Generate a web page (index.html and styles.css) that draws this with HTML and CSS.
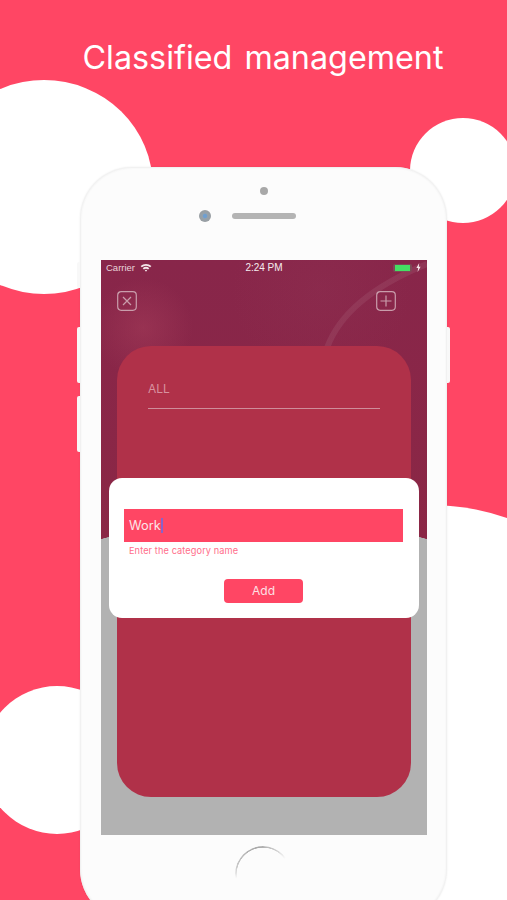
FILE: index.html
```html
<!DOCTYPE html>
<html lang="en">
<head>
<meta charset="utf-8">
<title>Classified management</title>
<link rel="stylesheet" href="styles.css">
</head>
<body>
<div class="stage">
  <div class="blob blob-a"></div>
  <div class="blob blob-b"></div>
  <div class="blob blob-c"></div>
  <div class="blob blob-d"></div>
  <h1 class="title">Classified management</h1>
  <div class="phone">
    <span class="side side-1"></span>
    <span class="side side-2"></span>
    <span class="side side-3"></span>
    <span class="side side-4"></span>
    <div class="bezel-top">
      <span class="sensor"></span>
      <div class="cam-row">
        <span class="camera"></span>
        <span class="speaker"></span>
      </div>
    </div>
    <div class="screen">
      <svg class="arc" viewBox="0 0 326 100" aria-hidden="true"><path d="M226 88C236 60 262 30 326 4" fill="none" stroke="#fff" stroke-opacity=".07" stroke-width="6"/></svg>
      <div class="statusbar">
        <div class="status-left">
          <span>Carrier</span>
          <svg class="wifi" viewBox="0 0 12 9" aria-hidden="true"><path d="M.6 3A8 8 0 0 1 11.4 3L10.200 4.300A6.200 6.200 0 0 0 1.800 4.300ZM2.700 5.200A5 5 0 0 1 9.300 5.200L8.100 6.500A3.300 3.300 0 0 0 3.900 6.500ZM4.800 7.300A1.800 1.800 0 0 1 7.200 7.300L6 8.700Z" fill="#f4e6ea"/></svg>
        </div>
        <span class="clock">2:24 PM</span>
        <div class="status-right">
          <span class="battery"><span class="charge"></span></span>
          <svg class="bolt" viewBox="0 0 5 9" aria-hidden="true"><path d="M3.200 0 .4 5H2.200L1.600 9 4.600 3.700H2.800Z" fill="#f4e6ea"/></svg>
        </div>
      </div>
      <div class="navbar">
        <svg class="nav-icon" viewBox="0 0 20 20" aria-hidden="true"><rect x=".7" y=".7" width="18.600" height="18.600" rx="3.500"/><path d="M6 6 14 14M14 6 6 14"/></svg>
        <svg class="nav-icon" viewBox="0 0 20 20" aria-hidden="true"><rect x=".7" y=".7" width="18.600" height="18.600" rx="3.500"/><path d="M10 4.500V15.500M4.500 10H15.500"/></svg>
      </div>
      <div class="card">
        <div class="card-label">ALL</div>
      </div>
    </div>
    <div class="dialog">
      <div class="field">Work<span class="caret"></span></div>
      <div class="hint">Enter the category name</div>
      <button class="add" type="button">Add</button>
    </div>
    <div class="home"></div>
  </div>
</div>
</body>
</html>
```
FILE: styles.css
```css
* { box-sizing: border-box; }
html, body { margin: 0; padding: 0; }
body { background: #ff4664; font-family: "Inter", "Liberation Sans", sans-serif; }
.stage { position: relative; width: 507px; height: 900px; overflow: hidden; background: #ff4664; padding-top: 39px; }
.blob { position: absolute; border-radius: 50%; background: #fff; }
.blob-a { left: -65px; top: 80px; width: 218px; height: 214px; }
.blob-b { left: 410px; top: 118px; width: 106px; height: 105px; }
.blob-c { left: 195px; top: 505px; width: 470px; height: 470px; }
.blob-d { left: -17px; top: 686px; width: 148px; height: 148px; }
.title { position: relative; margin: 0; text-align: center; color: #fff; font-family: "Inter", sans-serif; font-size: 32.300px; line-height: 38px; font-weight: 400; word-spacing: 3px; padding-left: 19px; white-space: nowrap; }
.phone { position: relative; width: 367px; margin: 90px 0 0 79.500px; height: 754px; background: #fcfcfc; border-radius: 52px; box-shadow: inset 0 0 2px 1px #eeeeee, 0 0 2px rgba(0, 0, 0, .08); padding: 0 20px 0 21.500px; }
.side { position: absolute; width: 3px; background: #f8f8f8; border-radius: 2px 0 0 2px; left: -3px; }
.side-1 { top: 95px; height: 26px; }
.side-2 { top: 160px; height: 56px; }
.side-3 { top: 229px; height: 56px; }
.side-4 { left: auto; right: -3px; top: 160px; height: 56px; border-radius: 0 2px 2px 0; }
.bezel-top { height: 93px; display: flex; flex-direction: column; align-items: center; padding-top: 20px; }
.sensor { width: 8px; height: 8px; border-radius: 50%; background: #a8a8a8; }
.cam-row { display: flex; align-items: center; gap: 21px; margin-top: 15px; margin-left: -33px; }
.camera { width: 12px; height: 12px; border-radius: 50%; background: radial-gradient(circle, #6f9fd0 0 20%, #96a2ab 32%, #9a9a9a 100%); }
.speaker { width: 64px; height: 6px; border-radius: 3px; background: #b4b4b4; }
.screen {
  position: relative;
  width: 326px;
  height: 575px;
  overflow: hidden;
  background:
    radial-gradient(circle 620px at 163px 877px, #b2b2b2 619.500px, transparent 620px),
    radial-gradient(circle 50px at 42px 68px, rgba(190, 80, 105, .28), transparent),
    radial-gradient(circle 90px at 220px 30px, rgba(150, 60, 90, .18), transparent),
    linear-gradient(#88264a, #8b2745 50%, #8c2340);
}
.arc { position: absolute; left: 0; top: 0; width: 326px; height: 100px; }
.statusbar { position: relative; height: 15px; display: grid; grid-template-columns: 1fr auto 1fr; align-items: center; padding: 0 6px 0 5px; color: #e8d3da; font-family: "Liberation Sans", sans-serif; font-size: 9.500px; }
.status-left { display: flex; align-items: center; gap: 5px; }
.wifi { width: 12px; height: 9px; }
.clock { color: #f6ecef; font-size: 10px; margin-left: 1px; }
.status-right { display: flex; align-items: center; justify-content: flex-end; gap: 4px; }
.battery { width: 19px; height: 8px; padding: 1px 2px; border-radius: 2px; background: #7d4a57; display: block; }
.charge { display: block; width: 100%; height: 100%; background: #45e063; }
.bolt { width: 5px; height: 9px; }
.navbar { position: relative; display: flex; justify-content: space-between; padding: 16px 31px 0 16px; }
.nav-icon { width: 20px; height: 20px; fill: none; stroke: #c99dab; stroke-width: 1.200; }
.card { position: relative; width: 294px; height: 451px; margin: 35px 0 0 16px; background: #b03149; border-radius: 34px; padding: 29px 31px 0; }
.card-label { height: 34px; border-bottom: 1px solid #cf8d9a; color: #d8929f; font-size: 12px; line-height: 28px; }
.dialog { position: absolute; left: 29.500px; top: 311px; width: 310px; height: 140px; background: #fff; border-radius: 13px; padding: 31px 16px 0 15px; }
.field { height: 33px; background: #ff4664; color: #fde4e8; font-size: 12.800px; line-height: 34px; padding-left: 5px; }
.caret { display: inline-block; width: 2px; height: 15px; background: #8a62c8; vertical-align: -3px; }
.hint { color: #ff6d8a; font-size: 9.200px; line-height: 12px; margin-top: 3px; padding-left: 5px; letter-spacing: .1px; }
.add { display: block; width: 79px; height: 24px; margin: 22px 0 0 100px; background: #ff4664; color: #fde0e5; border: 0; border-radius: 4px; font: 400 12px/24px "Inter", sans-serif; padding: 0; }
.home { width: 56px; height: 56px; margin: 11px 0 0 133.500px; border-radius: 50%; background: conic-gradient(from -100deg, transparent 0deg, #c8c8c8 25deg, #a8a8a8 90deg, #d0d0d0 130deg, transparent 155deg); -webkit-mask: radial-gradient(closest-side, transparent calc(100% - 2px), #000 calc(100% - 1.500px)); mask: radial-gradient(closest-side, transparent calc(100% - 2px), #000 calc(100% - 1.500px)); }
```
